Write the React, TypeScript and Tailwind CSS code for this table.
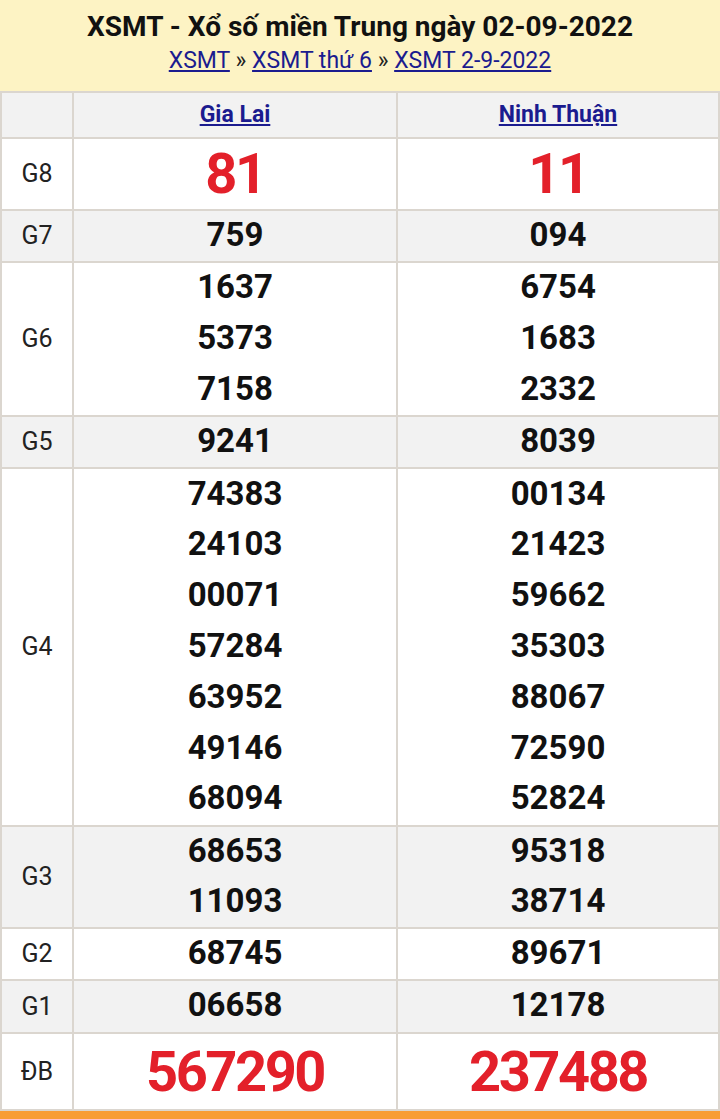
import React from "react";

const rows: { label: string; a: string[]; b: string[]; h: string; bg: string; big?: boolean }[] = [
  { label: "G8", a: ["81"], b: ["11"], h: "h-[72px]", bg: "bg-white", big: true },
  { label: "G7", a: ["759"], b: ["094"], h: "h-[52px]", bg: "bg-[#f2f2f2]" },
  { label: "G6", a: ["1637", "5373", "7158"], b: ["6754", "1683", "2332"], h: "h-[154px]", bg: "bg-white" },
  { label: "G5", a: ["9241"], b: ["8039"], h: "h-[52px]", bg: "bg-[#f2f2f2]" },
  {
    label: "G4",
    a: ["74383", "24103", "00071", "57284", "63952", "49146", "68094"],
    b: ["00134", "21423", "59662", "35303", "88067", "72590", "52824"],
    h: "h-[358px]",
    bg: "bg-white",
  },
  { label: "G3", a: ["68653", "11093"], b: ["95318", "38714"], h: "h-[102px]", bg: "bg-[#f2f2f2]" },
  { label: "G2", a: ["68745"], b: ["89671"], h: "h-[52px]", bg: "bg-white" },
  { label: "G1", a: ["06658"], b: ["12178"], h: "h-[53px]", bg: "bg-[#f2f2f2]" },
  { label: "ĐB", a: ["567290"], b: ["237488"], h: "h-[77px]", bg: "bg-white", big: true },
];

function Nums({ list, big }: { list: string[]; big?: boolean }) {
  return (
    <div className="flex flex-col items-center justify-center h-full">
      {list.map((n, i) =>
        big ? (
          <div key={i} className="text-[56px] leading-none font-bold text-[#e3202a] tracking-[-2.5px]">
            {n}
          </div>
        ) : (
          <div key={i} className="h-[50.8px] flex items-center pb-[3px] text-[33px] font-bold text-[#111] leading-none">
            {n}
          </div>
        )
      )}
    </div>
  );
}

export default function App() {
  return (
    <div className="w-[720px] h-[1119px] bg-white flex flex-col" style={{ fontFamily: "Roboto, 'Noto Sans', sans-serif" }}>
      <div className="h-[91px] bg-[#fdf3c4] flex flex-col items-center pt-[7px]">
        <div className="text-[28px] font-bold text-[#111] leading-[40px]">XSMT - Xổ số miền Trung ngày 02-09-2022</div>
        <div className="text-[23px] text-[#222] leading-[28px] mt-[0px]">
          <span className="underline text-[#1b1b8f]">XSMT</span>
          <span> » </span>
          <span className="underline text-[#1b1b8f]">XSMT thứ 6</span>
          <span> » </span>
          <span className="underline text-[#1b1b8f]">XSMT 2-9-2022</span>
        </div>
      </div>
      <div className="grid grid-cols-[72px_324px_322px] border-l-2 border-t-2 border-[#dbd6cf]">
        <div className="h-[46px] bg-[#f2f2f2] border-r-2 border-b-2 border-[#dbd6cf]" />
        <div className="h-[46px] bg-[#f2f2f2] border-r-2 border-b-2 border-[#dbd6cf] flex items-center justify-center">
          <span className="text-[23px] font-bold underline text-[#1b1b8f]">Gia Lai</span>
        </div>
        <div className="h-[46px] bg-[#f2f2f2] border-r-2 border-b-2 border-[#dbd6cf] flex items-center justify-center">
          <span className="text-[23px] font-bold underline text-[#1b1b8f]">Ninh Thuận</span>
        </div>
        {rows.map((r) => (
          <React.Fragment key={r.label}>
            <div className={`${r.h} ${r.bg} border-r-2 border-b-2 border-[#dbd6cf] flex items-center justify-center text-[25px] text-[#222]`}>
              {r.label}
            </div>
            <div className={`${r.h} ${r.bg} border-r-2 border-b-2 border-[#dbd6cf]`}>
              <Nums list={r.a} big={r.big} />
            </div>
            <div className={`${r.h} ${r.bg} border-r-2 border-b-2 border-[#dbd6cf]`}>
              <Nums list={r.b} big={r.big} />
            </div>
          </React.Fragment>
        ))}
      </div>
      <div className="flex-1 bg-[#f89d36]" />
    </div>
  );
}
